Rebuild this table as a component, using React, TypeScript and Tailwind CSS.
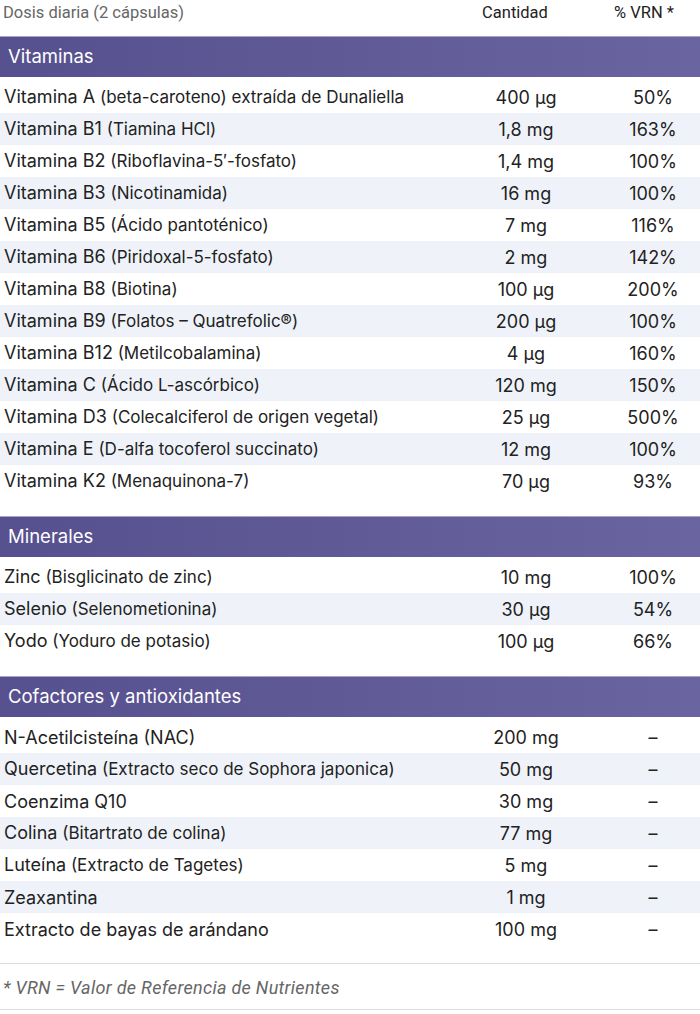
type Row = { name: string; note?: string; amount: string; vrn: string };

const sections: { title: string; rows: Row[] }[] = [
  {
    title: 'Vitaminas',
    rows: [
      { name: 'Vitamina A', note: '(beta-caroteno) extraída de Dunaliella', amount: '400 µg', vrn: '50%' },
      { name: 'Vitamina B1', note: '(Tiamina HCl)', amount: '1,8 mg', vrn: '163%' },
      { name: 'Vitamina B2', note: '(Riboflavina-5′-fosfato)', amount: '1,4 mg', vrn: '100%' },
      { name: 'Vitamina B3', note: '(Nicotinamida)', amount: '16 mg', vrn: '100%' },
      { name: 'Vitamina B5', note: '(Ácido pantoténico)', amount: '7 mg', vrn: '116%' },
      { name: 'Vitamina B6', note: '(Piridoxal-5-fosfato)', amount: '2 mg', vrn: '142%' },
      { name: 'Vitamina B8', note: '(Biotina)', amount: '100 µg', vrn: '200%' },
      { name: 'Vitamina B9', note: '(Folatos – Quatrefolic®)', amount: '200 µg', vrn: '100%' },
      { name: 'Vitamina B12', note: '(Metilcobalamina)', amount: '4 µg', vrn: '160%' },
      { name: 'Vitamina C', note: '(Ácido L-ascórbico)', amount: '120 mg', vrn: '150%' },
      { name: 'Vitamina D3', note: '(Colecalciferol de origen vegetal)', amount: '25 µg', vrn: '500%' },
      { name: 'Vitamina E', note: '(D-alfa tocoferol succinato)', amount: '12 mg', vrn: '100%' },
      { name: 'Vitamina K2', note: '(Menaquinona-7)', amount: '70 µg', vrn: '93%' },
    ],
  },
  {
    title: 'Minerales',
    rows: [
      { name: 'Zinc', note: '(Bisglicinato de zinc)', amount: '10 mg', vrn: '100%' },
      { name: 'Selenio', note: '(Selenometionina)', amount: '30 µg', vrn: '54%' },
      { name: 'Yodo', note: '(Yoduro de potasio)', amount: '100 µg', vrn: '66%' },
    ],
  },
  {
    title: 'Cofactores y antioxidantes',
    rows: [
      { name: 'N-Acetilcisteína (NAC)', amount: '200 mg', vrn: '–' },
      { name: 'Quercetina', note: '(Extracto seco de Sophora japonica)', amount: '50 mg', vrn: '–' },
      { name: 'Coenzima Q10', amount: '30 mg', vrn: '–' },
      { name: 'Colina', note: '(Bitartrato de colina)', amount: '77 mg', vrn: '–' },
      { name: 'Luteína', note: '(Extracto de Tagetes)', amount: '5 mg', vrn: '–' },
      { name: 'Zeaxantina', amount: '1 mg', vrn: '–' },
      { name: 'Extracto de bayas de arándano', amount: '100 mg', vrn: '–' },
    ],
  },
];

function SectionBand({ title }: { title: string }) {
  return (
    <div className="h-[41px] border-t border-[#a6a2c8] bg-gradient-to-r from-[#57508e] to-[#6a64a0] px-2 flex items-center">
      <span className="text-[18.5px] text-white">{title}</span>
    </div>
  );
}

export default function App() {
  return (
    <div className="w-[700px] bg-white text-[#222] font-['Inter',sans-serif]">
      {/* cabecera */}
      <div className="flex h-[27px] items-center text-[16.5px] font-['Roboto',sans-serif]">
        <span className="flex-1 pl-[3px] text-[#666]">Dosis diaria (2 cápsulas)</span>
        <span className="w-[146px] text-center text-[#222]">Cantidad</span>
        <span className="w-[112px] text-center text-[#222]">% VRN *</span>
      </div>
      <div className="h-[9px]" />

      {sections.map((s, si) => (
        <div key={s.title} className={si > 0 ? 'mt-[19px]' : ''}>
          <SectionBand title={s.title} />
          <div className="pt-[4px]">
            {s.rows.map((r, i) => (
              <div key={r.name} className={`flex h-[32px] items-center ${i % 2 === 1 ? 'bg-[#eff3f9]' : 'bg-white'}`}>
                <div className="flex-1 pl-[4px] whitespace-nowrap">
                  <span className="text-[18px]">{r.name}</span>
                  {r.note && <span className="text-[17px]"> {r.note}</span>}
                </div>
                <div className="w-[160px] text-center text-[18px]">{r.amount}</div>
                <div className="w-[94px] text-center text-[18px]">{r.vrn}</div>
              </div>
            ))}
          </div>
        </div>
      ))}

      <div className="mt-[18px] border-t border-[#dcdcdc]" />
      <div className="flex h-[45px] items-center pl-[3px] pt-[2px] text-[18px] tracking-[0.3px] italic text-[#666] font-['Roboto',sans-serif]">
        * VRN = Valor de Referencia de Nutrientes
      </div>
      <div className="border-t border-[#dcdcdc]" />
    </div>
  );
}
